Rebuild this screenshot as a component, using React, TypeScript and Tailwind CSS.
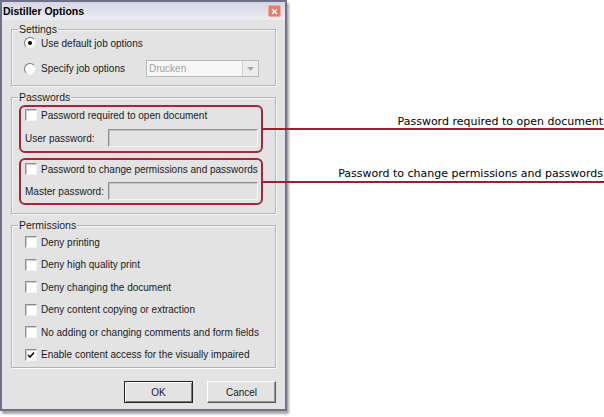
import React from 'react';

const dlgFont = { fontFamily: '"Liberation Sans", Arial, sans-serif' };

function Checkbox({ checked = false }: { checked?: boolean }) {
  return (
    <span className="w-[12px] h-[12px] shrink-0 bg-white border border-t-[#8d8d8d] border-l-[#8d8d8d] border-b-[#f4f4f4] border-r-[#f4f4f4] shadow-[inset_1px_1px_0_#cfcfcf] flex items-center justify-center">
      {checked && (
        <svg width="8" height="8" viewBox="0 0 8 8">
          <path d="M1 4 L3 6 L7 1.5" fill="none" stroke="#111" strokeWidth="1.6" />
        </svg>
      )}
    </span>
  );
}

function Radio({ checked = false }: { checked?: boolean }) {
  return (
    <span className="w-[12px] h-[12px] shrink-0 rounded-full bg-white border border-t-[#7a7a7a] border-l-[#7a7a7a] border-b-[#e8e8e8] border-r-[#e8e8e8] flex items-center justify-center">
      {checked && <span className="w-[4px] h-[4px] rounded-full bg-black" />}
    </span>
  );
}

function Field() {
  return (
    <div className="w-[150px] h-[18px] bg-[#e3e3e3] border border-t-[#8f8f8f] border-l-[#8f8f8f] border-b-[#f6f6f6] border-r-[#f6f6f6] shadow-[inset_1px_1px_0_#c4c4c4]" />
  );
}

function Group({ title, className, children }: { title: string; className: string; children: React.ReactNode }) {
  return (
    <fieldset className={`border border-[#b3b3b3] shadow-[1px_1px_0_#fafafa,inset_1px_1px_0_#fafafa] ${className}`}>
      <legend className="ml-[6px] px-[1px] h-[12px] leading-[12px] text-[10.5px] text-[#1a1a1a]">{title}</legend>
      {children}
    </fieldset>
  );
}

const permissions: [string, boolean][] = [
  ['Deny printing', false],
  ['Deny high quality print', false],
  ['Deny changing the document', false],
  ['Deny content copying or extraction', false],
  ['No adding or changing comments and form fields', false],
  ['Enable content access for the visually impaired', true],
];

export default function App() {
  return (
    <div className="relative w-[604px] h-[417px] bg-white overflow-hidden">
      <div
        className="w-[287px] h-[411px] flex flex-col bg-[#e3e3e3] border-2 border-[#6e7189] shadow-[2px_3px_2px_rgba(0,0,0,0.35)] text-[10px] text-[#1a1a1a]"
        style={dlgFont}
      >
        <div className="h-[18px] shrink-0 flex items-center justify-between pl-[1px] pr-[4px] bg-gradient-to-b from-[#d4d6e3] to-[#eceef4]">
          <span className="font-bold text-[10.5px] leading-none text-black">Distiller Options</span>
          <span className="w-[13px] h-[12px] rounded-[2px] bg-[#e8786a] border border-[#f3a79c] flex items-center justify-center">
            <svg width="7" height="7" viewBox="0 0 7 7">
              <path d="M1 1 L6 6 M6 1 L1 6" stroke="#fff" strokeWidth="1.5" />
            </svg>
          </span>
        </div>

        <div className="flex flex-col px-[9px]">
          <Group title="Settings" className="mt-[3px] h-[63px]">
            <div className="pl-[12px] flex items-center gap-[5px] h-[16px]">
              <Radio checked />
              <span>Use default job options</span>
            </div>
            <div className="pl-[12px] mt-[9px] flex items-center h-[17px]">
              <Radio />
              <span className="ml-[5px] w-[105px]">Specify job options</span>
              <div className="w-[113px] h-[17px] flex bg-[#f7f7f7] border border-[#b9b9b9]">
                <span className="flex-1 pl-[2px] leading-[15px] text-[#a0a0a0]">Drucken</span>
                <span className="w-[16px] h-[15px] bg-[#ececec] border-l border-[#d0d0d0] flex items-center justify-center">
                  <svg width="7" height="4" viewBox="0 0 7 4">
                    <path d="M0 0 H7 L3.5 4 Z" fill="#a8a8a8" />
                  </svg>
                </span>
              </div>
            </div>
          </Group>

          <Group title="Passwords" className="mt-[5px] h-[123px]">
            <div className="ml-[7px] mt-[2px] w-[244px] h-[48px] rounded-[6px] border-2 border-[#a3263a] pl-[4px] pt-[1px]">
              <div className="flex items-center gap-[4px] h-[14px]">
                <Checkbox />
                <span>Password required to open document</span>
              </div>
              <div className="flex items-center mt-[7px]">
                <span className="w-[83px]">User password:</span>
                <Field />
              </div>
            </div>
            <div className="ml-[7px] mt-[5px] w-[244px] h-[47px] rounded-[6px] border-2 border-[#a3263a] pl-[4px] pt-[2px]">
              <div className="flex items-center gap-[4px] h-[14px] whitespace-nowrap">
                <Checkbox />
                <span>Password to change permissions and passwords</span>
              </div>
              <div className="flex items-center mt-[6px]">
                <span className="w-[83px]">Master password:</span>
                <Field />
              </div>
            </div>
          </Group>

          <Group title="Permissions" className="mt-[5px] h-[149px]">
            <div className="pl-[13px] flex flex-col">
              {permissions.map(([label, checked]) => (
                <div key={label} className="h-[22.5px] flex items-center gap-[4px]">
                  <Checkbox checked={checked} />
                  <span>{label}</span>
                </div>
              ))}
            </div>
          </Group>

          <div className="mt-[13px] flex justify-end gap-[14px]">
            <button className="w-[69px] h-[22px] border border-[#222] bg-[#e3e3e3] shadow-[inset_1px_1px_0_#fff,inset_-1px_-1px_0_#777] flex items-center justify-center">
              <span className="px-[2px]">OK</span>
            </button>
            <button className="w-[69px] h-[22px] border border-t-white border-l-white border-b-[#555] border-r-[#555] bg-[#e3e3e3] shadow-[inset_-1px_-1px_0_#999] flex items-center justify-center">
              Cancel
            </button>
          </div>
        </div>
      </div>

      {/* annotation callouts */}
      <div className="absolute left-[263px] right-0 top-[128px] h-[2px] bg-[#a11e2c]" />
      <div className="absolute left-[263px] right-0 top-[181px] h-[2px] bg-[#a11e2c]" />
      <div
        className="absolute right-[1px] top-[115px] text-[11px] leading-[14px] text-black"
        style={{ fontFamily: '"DejaVu Sans", Verdana, sans-serif' }}
      >
        Password required to open document
      </div>
      <div
        className="absolute right-[1px] top-[167px] text-[11px] leading-[14px] text-black"
        style={{ fontFamily: '"DejaVu Sans", Verdana, sans-serif' }}
      >
        Password to change permissions and passwords
      </div>
    </div>
  );
}
